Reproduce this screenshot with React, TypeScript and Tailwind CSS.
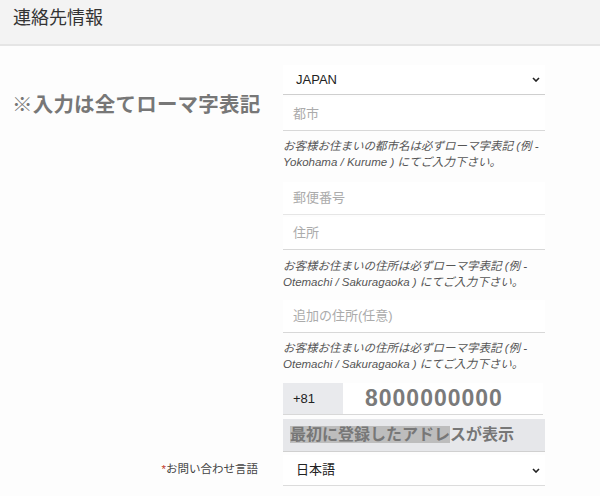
const jp = { fontFamily: '"Liberation Sans", "Noto Sans CJK JP", sans-serif' };

function Chevron() {
  return (
    <svg width="8" height="5" viewBox="0 0 8 5" className="text-[#222]">
      <polyline points="1,1 4,4 7,1" fill="none" stroke="currentColor" strokeWidth="1.6" />
    </svg>
  );
}

function Select({ value, className = '' }: { value: string; className?: string }) {
  return (
    <div className={`flex items-center justify-between bg-white border-b border-[#cfcfcf] pl-[13px] pr-[5px] text-[13px] text-[#222] ${className}`}>
      <span>{value}</span>
      <Chevron />
    </div>
  );
}

function Field({ placeholder, className = '' }: { placeholder: string; className?: string }) {
  return (
    <div className={`flex items-center bg-white border-b pl-[10px] text-[13px] text-[#ababab] ${className}`}>
      {placeholder}
    </div>
  );
}

function Help({ children, className = '' }: { children: React.ReactNode; className?: string }) {
  return <p className={`text-[11.5px] leading-[16px] italic text-[#555] ${className}`}>{children}</p>;
}

export default function App() {
  return (
    <div style={jp} className="w-[600px] h-[496px] bg-[#fdfdfd] overflow-hidden">
      <header className="h-[46px] bg-[#f3f3f3] border-b-2 border-[#e5e5e5] px-[13px] pt-[5px]">
        <h1 className="text-[18px] leading-[26px] text-[#333]">連絡先情報</h1>
      </header>
      <div className="flex">
        <div className="w-[283px] shrink-0 pl-[12px] pt-[45px]">
          <p className="text-[20.5px] font-bold text-[#777] tracking-[0.2px] leading-[28px]">※入力は全てローマ字表記</p>
        </div>
        <div className="w-[262px] pt-[19px] flex flex-col">
          <Select value="JAPAN" className="h-[30px]" />
          <Field placeholder="都市" className="mt-[2px] h-[34px] border-[#d8d8d8]" />
          <Help className="mt-[7px]">
            お客様お住まいの都市名は必ずローマ字表記 (例 - Yokohama / Kurume ) にてご入力下さい。
          </Help>
          <Field placeholder="郵便番号" className="mt-[12px] h-[33px] border-[#e6e6e6]" />
          <Field placeholder="住所" className="mt-[2px] h-[33px] border-[#d8d8d8]" />
          <Help className="mt-[8px]">
            お客様お住まいの住所は必ずローマ字表記 (例 - Otemachi / Sakuragaoka ) にてご入力下さい。
          </Help>
          <Field placeholder="追加の住所(任意)" className="mt-[10px] h-[33px] border-[#d8d8d8]" />
          <Help className="mt-[7px]">
            お客様お住まいの住所は必ずローマ字表記 (例 - Otemachi / Sakuragaoka ) にてご入力下さい。
          </Help>
          <div className="mt-[11px] flex h-[32px] border-b border-[#d8d8d8] w-[260px]">
            <div className="w-[60px] bg-[#e9eaed] flex items-center pl-[10px] text-[13px] text-[#222]">+81</div>
            <div className="flex-1 bg-white flex items-center pl-[22px] text-[23px] font-bold text-[#7a7a7a] tracking-[1px]">
              8000000000
            </div>
          </div>
          <div className="mt-[4px] h-[33px] bg-[#e6e7ea] border-b border-[#d0d0d0] flex items-center pl-[7px]">
            <span className="text-[16px] font-bold text-[#777] leading-[18px]">
              <span className="bg-[#bdbdbd]">最初に登録したアドレ</span>スが表示
            </span>
          </div>
          <div className="relative mt-[3px]">
            <span className="absolute right-[287px] top-[6px] whitespace-nowrap text-[11.5px] text-[#444]">
              <span className="text-[#c0392b]">*</span>お問い合わせ言語
            </span>
            <Select value="日本語" className="h-[31px] border-[#dcdcdc]" />
          </div>
        </div>
      </div>
    </div>
  );
}
